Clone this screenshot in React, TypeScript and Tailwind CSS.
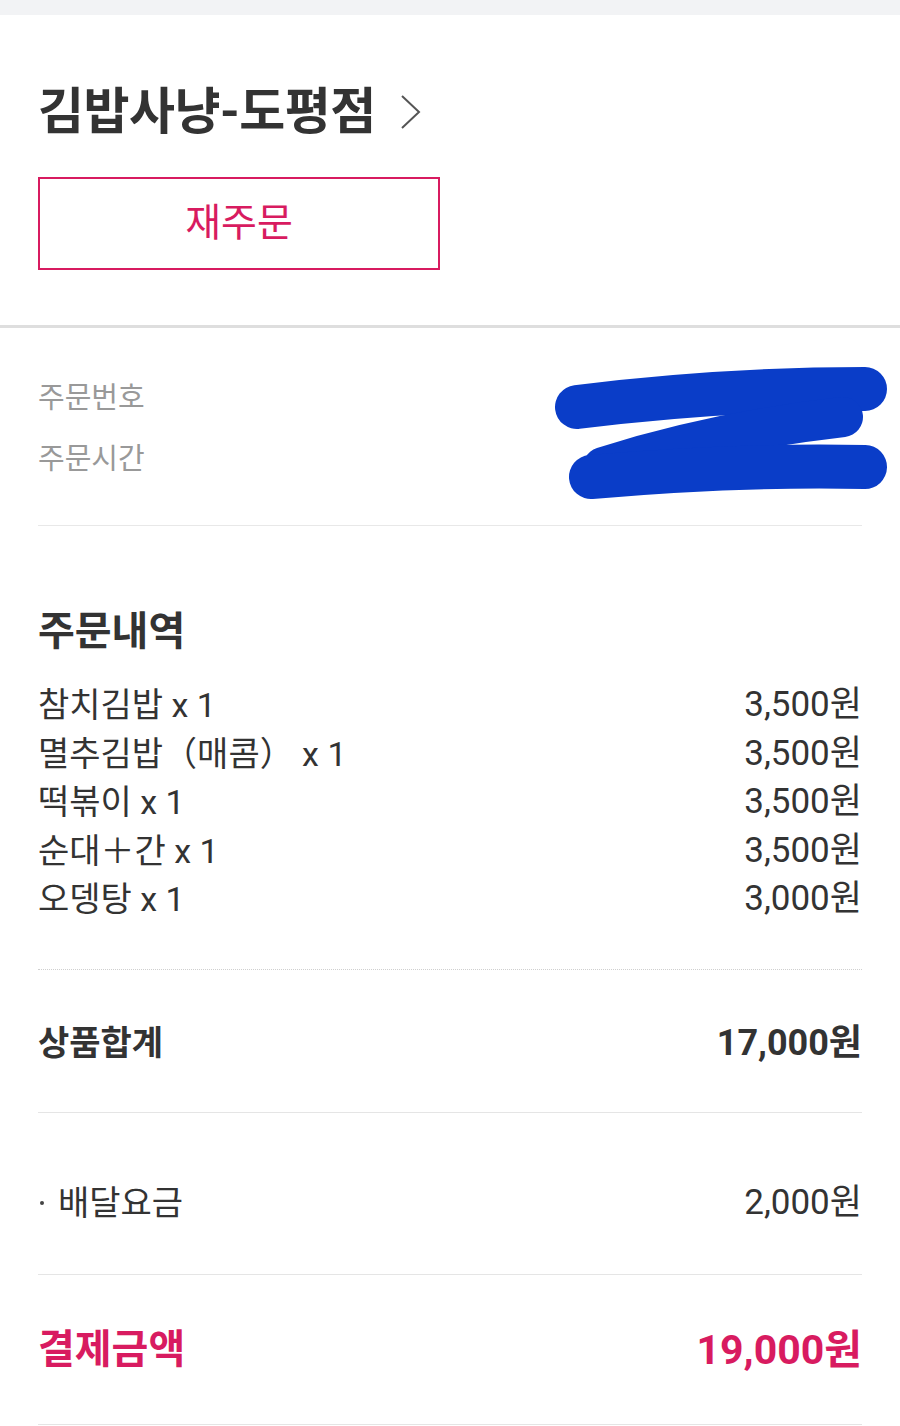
import React from 'react';

const items = [
  { name: '참치김밥 x 1', price: '3,500원' },
  { name: '멸추김밥（매콤） x 1', price: '3,500원' },
  { name: '떡볶이 x 1', price: '3,500원' },
  { name: '순대＋간 x 1', price: '3,500원' },
  { name: '오뎅탕 x 1', price: '3,000원' },
];

// redaction marker over the order number / time values
const Scribble: React.FC = () => (
  <svg
    className="absolute left-[553px] top-[39px] pointer-events-none"
    width="340"
    height="140"
    viewBox="0 0 340 140"
  >
    <g stroke="#0a3dc8" strokeLinecap="round" fill="none">
      <path d="M24 40 C120 28 220 22 312 22" strokeWidth="44" />
      <path d="M290 50 C200 60 120 78 50 100" strokeWidth="40" />
      <path d="M38 110 C130 102 220 98 312 100" strokeWidth="44" />
    </g>
  </svg>
);

export default function App() {
  return (
    <div className="w-[900px] min-h-[1426px] bg-white font-['Roboto','Noto_Sans_CJK_KR',sans-serif] text-[#333]">
      <div className="h-[15px] bg-[#f2f3f5]" />

      <section className="px-[38px] pt-[69px] pb-[55px]">
        <div className="flex items-center h-[56px]">
          <h1 className="text-[50px] leading-[56px] font-bold tracking-[-0.5px] text-[#333]">김밥사냥-도평점</h1>
          <svg className="ml-[22px]" width="26" height="40" viewBox="0 0 26 40">
            <path d="M4 4 L21 20 L4 36" stroke="#555" strokeWidth="2" fill="none" />
          </svg>
        </div>
        <button className="mt-[37px] w-[402px] h-[93px] border-2 border-[#d81b60] flex items-center justify-center text-[39px] text-[#d81b60]">
          재주문
        </button>
      </section>

      <div className="h-[3px] bg-[#dedede]" />

      <section className="relative px-[38px]">
        <div className="pt-[50px] pb-[46px] border-b border-[#e8e8e8] flex flex-col gap-[21px] text-[29px] leading-[40px] text-[#999]">
          <div>주문번호</div>
          <div>주문시간</div>
        </div>
        <Scribble />
      </section>

      <section className="px-[38px]">
        <h2 className="pt-[82px] text-[40px] leading-[48px] font-bold text-[#333]">주문내역</h2>
        <ul className="mt-[25px] pb-[45px] border-b border-dotted border-[#cfcfcf]">
          {items.map((it) => (
            <li key={it.name} className="flex justify-between items-center leading-[48.5px] text-[#333]">
              <span className="text-[34px]">{it.name}</span>
              <span className="text-[35px]">{it.price}</span>
            </li>
          ))}
        </ul>

        <div className="pt-[49px] pb-[45px] border-b border-[#e5e5e5] flex justify-between items-center leading-[48px] font-bold text-[#333]">
          <span className="text-[34px]">상품합계</span>
          <span className="text-[36px]">17,000원</span>
        </div>

        <div className="pt-[66px] pb-[47px] border-b border-[#e5e5e5] flex justify-between items-center leading-[48px] text-[#333]">
          <span className="flex items-center text-[34px]">
            <span className="w-[4px] h-[4px] rounded-full bg-[#444] ml-[2px] mr-[14px]" />
            배달요금
          </span>
          <span className="text-[35px]">2,000원</span>
        </div>

        <div className="pt-[49px] pb-[48px] border-b border-[#e5e5e5] flex justify-between items-center leading-[52px] font-bold text-[#d81b60]">
          <span className="text-[40px]">결제금액</span>
          <span className="text-[41px]">19,000원</span>
        </div>
      </section>
    </div>
  );
}
